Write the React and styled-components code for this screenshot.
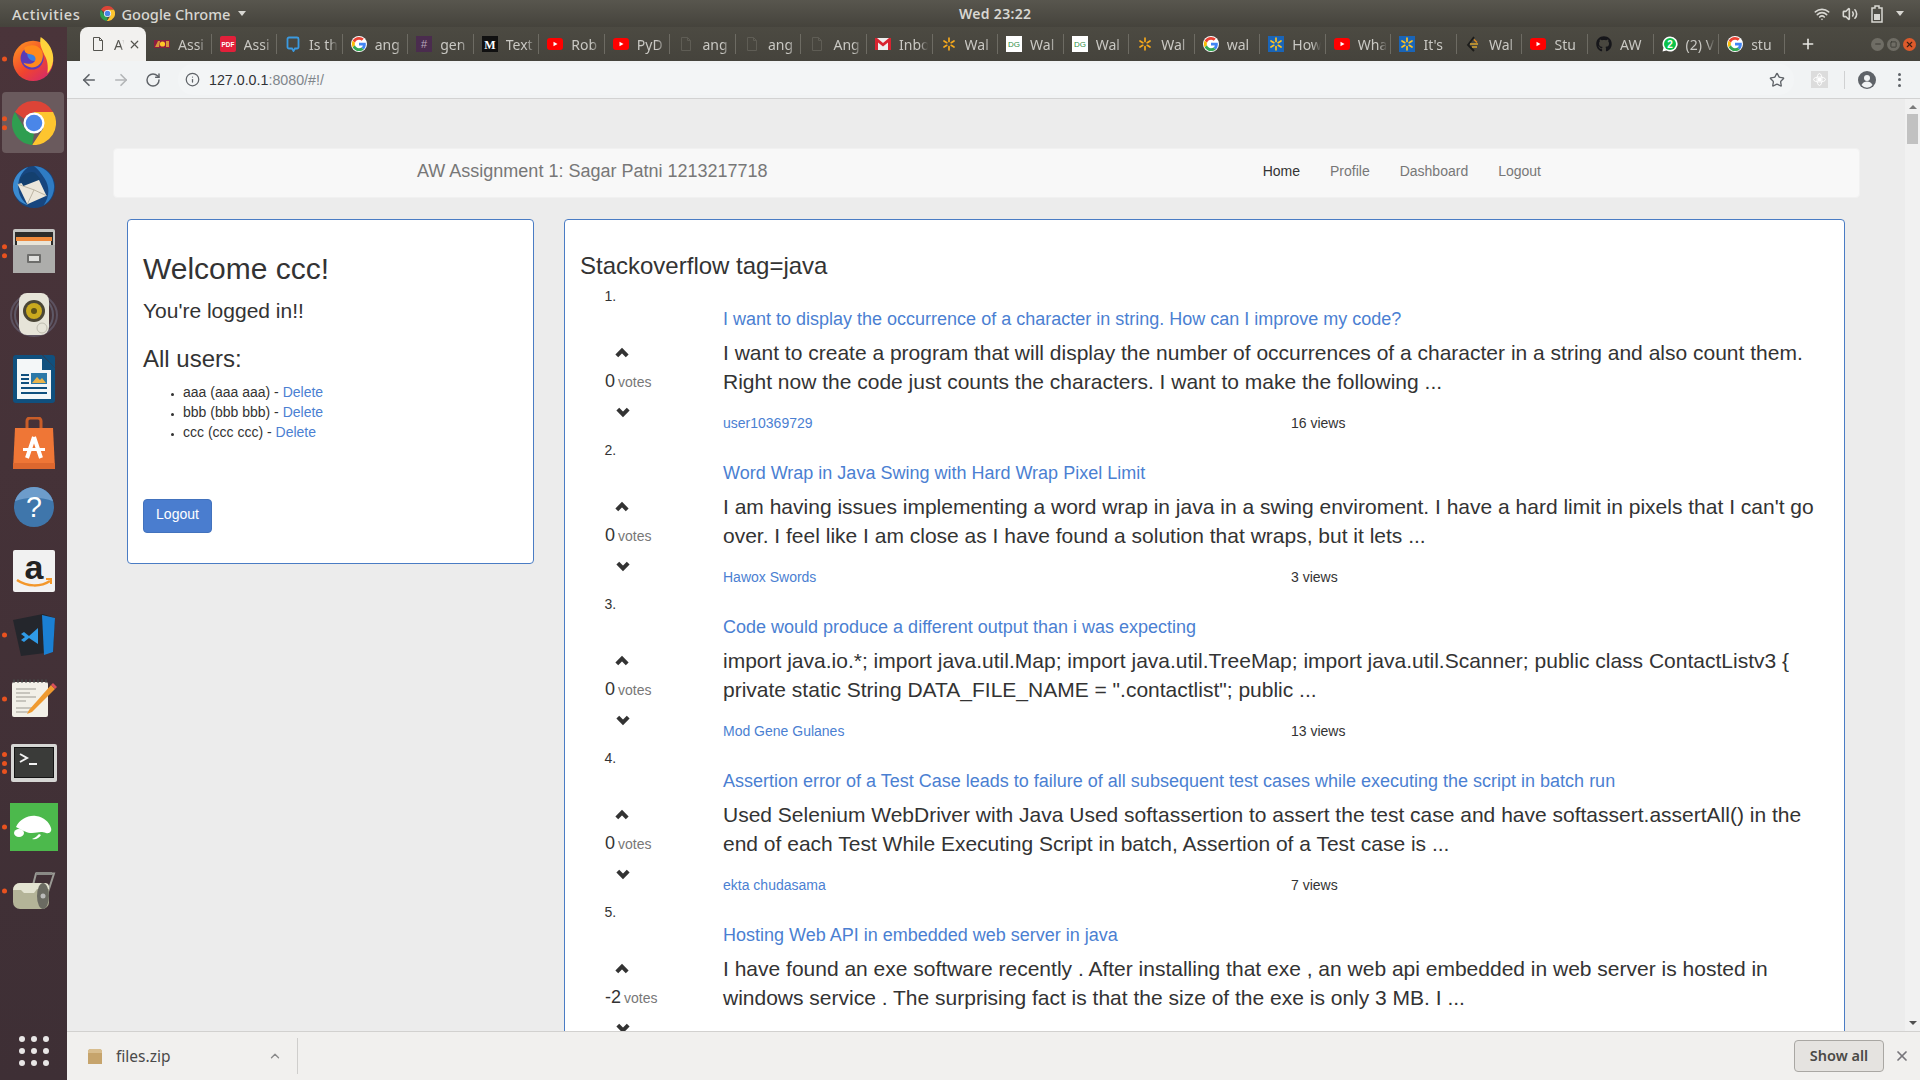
import React from 'react'
import styled, { createGlobalStyle } from 'styled-components'
import { ArrowLeft, ArrowRight, RotateCw, Info, Star, Wifi, Volume2, X, ChevronUp, Plus, Minus, Square } from 'lucide-react'
import { FaGithub } from 'react-icons/fa'

const Global = createGlobalStyle`
  html, body { margin: 0; padding: 0; height: 100%; overflow: hidden; background: #ececec; }
  * { box-sizing: border-box; }
`

const Screen = styled.div`
  width: 1920px;
  height: 1080px;
  display: flex;
  flex-direction: column;
  overflow: hidden;
  font-family: "Liberation Sans", Arial, sans-serif;
`

/* gnome top bar */
const TopBar = styled.div`
  flex: 0 0 27px;
  display: flex;
  align-items: center;
  padding: 0 12px;
  background: linear-gradient(#58564e, #45433c);
  color: #d8d7d2;
  font-family: "Noto Sans", sans-serif;
  font-size: 14.6px;
  font-weight: 500;
`
const TopLeft = styled.div`
  flex: 0 0 947px;
  display: flex;
  align-items: center;
`
const Activities = styled.span`
  margin-right: 20px;
  letter-spacing: 0.55px;
`
const AppName = styled.span`
  margin: 0 8px 0 6px;
`
const Caret = styled.span`
  width: 0;
  height: 0;
  border-left: 4.5px solid transparent;
  border-right: 4.5px solid transparent;
  border-top: 5px solid ${p => p.$color || '#d8d7d2'};
`
const Clock = styled.span`
  font-size: 14px;
  font-weight: 600;
  letter-spacing: 0.3px;
`
const Status = styled.div`
  margin-left: auto;
  display: flex;
  align-items: center;
  gap: 12px;
  padding-right: 4px;
`

const Body = styled.div`
  flex: 1;
  display: flex;
  min-height: 0;
`

/* launcher */
const Dock = styled.div`
  flex: 0 0 67px;
  background: linear-gradient(#4a343a, #3e2f35);
  display: flex;
  flex-direction: column;
`
const DockItem = styled.div`
  position: relative;
  flex: 0 0 64px;
  display: flex;
  align-items: center;
  justify-content: center;
  &::before {
    content: '';
    display: ${p => (p.$active ? 'block' : 'none')};
    position: absolute;
    left: 2px;
    right: 3px;
    top: 1px;
    bottom: 2px;
    background: #6a5a5d;
    border-radius: 4px;
  }
  svg { position: relative; }
`
const Pips = styled.div`
  position: absolute;
  left: 2px;
  top: 50%;
  transform: translateY(-50%);
  display: flex;
  flex-direction: column;
  gap: 3.5px;
  z-index: 1;
`
const Pip = styled.span`
  width: 5px;
  height: 5px;
  border-radius: 50%;
  background: #e9521f;
`
const AppGrid = styled.div`
  margin: auto auto 14px;
  display: grid;
  grid-template-columns: repeat(3, 6px);
  gap: 6px;
`
const AppDot = styled.span`
  width: 6px;
  height: 6px;
  border-radius: 50%;
  background: #e8e6e6;
`

const Browser = styled.div`
  flex: 1;
  min-width: 0;
  display: flex;
  flex-direction: column;
`
const TabStrip = styled.div`
  flex: 0 0 34px;
  display: flex;
  align-items: stretch;
  padding-left: 13px;
  background: linear-gradient(#4c4a42, #45433c);
`
const Tab = styled.div`
  position: relative;
  flex: 0 0 ${p => (p.$active ? '66px' : '65.56px')};
  display: flex;
  align-items: center;
  padding-left: ${p => (p.$active ? '10px' : '8px')};
  gap: 8px;
  font-family: "Noto Sans", sans-serif;
  font-size: 14px;
  color: ${p => (p.$active ? '#55544f' : '#c9c8c3')};
  background: ${p => (p.$active ? '#f2f1ef' : 'transparent')};
  border-radius: ${p => (p.$active ? '8px 8px 0 0' : '0')};
  &::after {
    content: '';
    display: ${p => (p.$active ? 'none' : 'block')};
    position: absolute;
    right: 0;
    top: 7px;
    height: 20px;
    width: 1px;
    background: #6d6b63;
  }
`
const TabIcon = styled.span`
  flex: 0 0 16px;
  height: 16px;
  display: flex;
  align-items: center;
  justify-content: center;
`
const TabLabel = styled.span`
  flex: 0 0 ${p => p.$w || 29}px;
  overflow: hidden;
  white-space: nowrap;
  -webkit-mask-image: linear-gradient(90deg, #000 70%, transparent);
  mask-image: linear-gradient(90deg, #000 70%, transparent);
`
const CloseTab = styled.span`
  margin-left: -4px;
  display: flex;
  color: #55544f;
`
const NewTab = styled.div`
  width: 46px;
  display: flex;
  align-items: center;
  justify-content: center;
  color: #e8e7e3;
`
const WinControls = styled.div`
  margin-left: auto;
  padding-right: 4px;
  display: flex;
  align-items: center;
  gap: 3px;
`
const WinButton = styled.span`
  width: 13px;
  height: 13px;
  border-radius: 50%;
  display: flex;
  align-items: center;
  justify-content: center;
  background: ${p => (p.$close ? '#dd5a2b' : '#6f6d65')};
  color: ${p => (p.$close ? '#3d2015' : '#3c3b35')};
`

const Toolbar = styled.div`
  flex: 0 0 38px;
  display: flex;
  align-items: center;
  background: #f1f3f4;
  border-bottom: 1px solid #d2d2d2;
  padding-left: 6px;
  color: #5f6368;
`
const NavIcon = styled.span`
  flex: 0 0 32px;
  display: flex;
  justify-content: center;
  color: ${p => (p.$off ? '#b3b5b7' : '#5f6368')};
`
const Omnibox = styled.div`
  flex: 0 0 1616px;
  margin-left: 9px;
  height: 31px;
  display: flex;
  align-items: center;
  padding: 0 9px 0 7px;
  border-radius: 15px;
  background: #f3f5f6;
  font-size: 14.25px;
`
const UrlHost = styled.span`
  margin-left: 9px;
  color: #303236;
`
const UrlRest = styled.span`
  color: #80868b;
`
const StarWrap = styled.span`
  margin-left: auto;
  display: flex;
  color: #5f6368;
`
const ExtIcon = styled.span`
  margin-left: 17px;
  width: 17px;
  height: 17px;
  background: #dcdcdc;
  display: flex;
  align-items: center;
  justify-content: center;
`
const ToolSep = styled.span`
  margin-left: 16px;
  width: 1px;
  height: 18px;
  background: #d0d1d2;
`
const Avatar = styled.span`
  margin-left: 13px;
  display: flex;
`
const Kebab = styled.span`
  margin-left: 22px;
  display: flex;
  flex-direction: column;
  gap: 2.5px;
  i {
    width: 3px;
    height: 3px;
    border-radius: 50%;
    background: #5f6368;
  }
`

const Viewport = styled.div`
  flex: 1;
  min-height: 0;
  display: flex;
  overflow: hidden;
  background: #ececec;
`
const Page = styled.div`
  flex: 1;
  min-width: 0;
  padding: 49px 45px 0 46px;
  color: #333;
  font-size: 14px;
  line-height: 20px;
`
const Scrollbar = styled.div`
  flex: 0 0 15px;
  display: flex;
  flex-direction: column;
  align-items: center;
  background: #f1f1f1;
  padding-top: 6px;
`
const ScrollThumb = styled.div`
  width: 11px;
  height: 30px;
  margin-top: 5px;
  background: #c1c1c1;
`
const ArrowUp = styled.span`
  width: 0;
  height: 0;
  border-left: 4px solid transparent;
  border-right: 4px solid transparent;
  border-bottom: 4px solid #7b7b7b;
`
const ArrowDown = styled(ArrowUp)`
  margin-top: auto;
  margin-bottom: 6px;
  border-bottom: 0;
  border-top: 4px solid #505050;
`

const Navbar = styled.div`
  height: 50px;
  display: flex;
  align-items: center;
  padding: 0 303px 4px;
  background: #f8f8f8;
  border: 1px solid #f1f1f1;
  border-radius: 4px;
`
const Brand = styled.span`
  font-size: 18px;
  color: #777;
`
const NavLinks = styled.div`
  margin-left: auto;
  margin-right: 15px;
  display: flex;
  gap: 30px;
`
const NavLink = styled.a`
  color: ${p => (p.$active ? '#333' : '#777')};
`
const Panels = styled.div`
  margin-top: 21px;
  padding: 0 15px 0 14px;
  display: flex;
  align-items: flex-start;
  gap: 30px;
`
const Panel = styled.div`
  flex: ${p => (p.$wide ? '1' : '0 0 407px')};
  min-width: 0;
  padding: 15px 15px ${p => (p.$wide ? '0' : '30px')};
  background: #fff;
  border: 1px solid #4a7cc4;
  border-radius: 4px;
`
const Welcome = styled.h2`
  margin: 17px 0 0;
  font-size: 30px;
  font-weight: 500;
  line-height: 33px;
`
const LoggedIn = styled.h4`
  margin: 15px 0 0;
  font-size: 21px;
  font-weight: 500;
  line-height: 22px;
`
const SubHead = styled.h3`
  margin: ${p => (p.$tight ? '18px' : '24px')} 0 0;
  font-size: 24px;
  font-weight: 500;
  line-height: 26px;
`
const Users = styled.ul`
  margin: 10px 0 0;
  padding-left: 40px;
  li::marker { font-size: 9px; }
`
const A = styled.a`
  color: #4b7fd2;
`
const PrimaryButton = styled.button`
  display: block;
  margin-top: 57px;
  width: 69px;
  height: 34px;
  padding: 0 0 4px;
  font: 14px "Liberation Sans", Arial, sans-serif;
  color: #fff;
  background: #4a7dcf;
  border: 1px solid #4272bd;
  border-radius: 4px;
`
const Questions = styled.ol`
  margin: 7px 0 0;
  padding: 0 0 0 40px;
`
const QuestionItem = styled.li`
  padding-bottom: 7.2px;
`
const MarkerLine = styled.div`
  height: 20px;
`
const QuestionRow = styled.div`
  margin-left: -15px;
  display: flex;
`
const VoteCol = styled.div`
  flex: 0 0 118px;
  padding-top: 40px;
  display: flex;
  flex-direction: column;
  align-items: flex-start;
`
const Chevron = styled.svg`
  display: block;
  margin-left: ${p => (p.$down ? '11px' : '10px')};
`
const VoteCount = styled.div`
  margin: 9px 0 11px;
  font-size: 18px;
  line-height: 24px;
  white-space: nowrap;
`
const VotesWord = styled.small`
  margin-left: -2px;
  font-size: 14px;
  color: #777;
`
const QuestionBody = styled.div`
  flex: 1;
  min-width: 0;
`
const QuestionTitle = styled.h4`
  margin: 1px 0 0;
  font-size: 18px;
  font-weight: 500;
  line-height: 24px;
`
const Lead = styled.p`
  margin: 7px 0 0;
  font-size: 21px;
  line-height: 29.4px;
`
const MetaRow = styled.div`
  margin-top: 16px;
  display: grid;
  grid-template-columns: 568px 1fr;
  height: 20px;
`

const Shelf = styled.div`
  flex: 0 0 49px;
  display: flex;
  align-items: center;
  background: #f1f0ee;
  border-top: 1px solid #d2d1cf;
  padding-left: 20px;
  font-family: "Noto Sans", sans-serif;
  color: #4a4a4a;
`
const FileName = styled.span`
  margin-left: 13px;
  width: 152px;
  font-size: 15.5px;
`
const ShelfSep = styled.span`
  margin-left: 15px;
  width: 1px;
  height: 36px;
  background: #cfcecc;
`
const ShowAll = styled.button`
  margin-left: auto;
  width: 90px;
  height: 32px;
  padding-bottom: 3px;
  font: 600 14.5px "Noto Sans", sans-serif;
  color: #4b4a47;
  background: #e5e3e0;
  border: 1px solid #a9a7a3;
  border-radius: 4px;
`
const ShelfClose = styled.span`
  margin: 0 10px;
  display: flex;
  color: #77757a;
`

const GoogleG = () => (
  <svg width="16" height="16" viewBox="-3 -3 54 54">
    <circle cx="24" cy="24" r="27" fill="#fff" />
    <path fill="#ea4335" d="M24 9.5c3.54 0 6.71 1.22 9.21 3.6l6.85-6.85C35.9 2.38 30.47 0 24 0 14.62 0 6.51 5.38 2.56 13.22l7.98 6.19C12.43 13.72 17.74 9.5 24 9.5z" />
    <path fill="#4285f4" d="M46.98 24.55c0-1.57-.15-3.09-.38-4.55H24v9.02h12.94c-.58 2.96-2.26 5.48-4.78 7.18l7.73 6c4.51-4.18 7.09-10.36 7.09-17.65z" />
    <path fill="#fbbc05" d="M10.53 28.59c-.48-1.45-.76-2.99-.76-4.59s.27-3.14.76-4.59l-7.98-6.19C.92 16.46 0 20.12 0 24c0 3.88.92 7.54 2.56 10.78l7.97-6.19z" />
    <path fill="#34a853" d="M24 48c6.48 0 11.93-2.13 16.06-5.81l-7.73-6c-2.15 1.45-4.92 2.3-8.33 2.3-6.26 0-11.57-4.22-13.47-9.91l-7.98 6.18C6.51 42.62 14.62 48 24 48z" />
  </svg>
)

const Spark = ({ color }) => (
  <g stroke={color} strokeWidth="1.7" strokeLinecap="round">
    <path d="M8 2.2v3.3M8 10.5v3.3M3 5l2.8 1.7M10.2 9.3 13 11M3 11l2.8-1.7M10.2 6.7 13 5" />
  </g>
)

const Favicon = ({ kind }) => {
  switch (kind) {
    case 'asu':
      return (
        <svg width="16" height="16" viewBox="0 0 16 16">
          <rect y="4" width="16" height="8" fill="#8c1d40" />
          <circle cx="8.5" cy="8" r="2.6" fill="#ffc627" />
          <path d="M1 11 4 5h2l-1 6zM12 5h3v6h-3z" fill="#e8b73a" opacity=".8" />
        </svg>
      )
    case 'pdf':
      return (
        <svg width="16" height="16" viewBox="0 0 16 16">
          <rect width="16" height="16" rx="2" fill="#e2203a" />
          <text x="8" y="10.6" fontSize="6.4" fontWeight="700" textAnchor="middle" fill="#fff" fontFamily="Liberation Sans">PDF</text>
        </svg>
      )
    case 'chat':
      return (
        <svg width="16" height="16" viewBox="0 0 16 16">
          <path d="M4 1.5h8a1.5 1.5 0 0 1 1.5 1.5v8a1.5 1.5 0 0 1-1.5 1.5H10L8.500 15 7 12.500H4A1.500 1.500 0 0 1 2.500 11V3A1.500 1.500 0 0 1 4 1.500z" fill="none" stroke="#3b9ae0" strokeWidth="1.800" />
        </svg>
      )
    case 'google':
      return <GoogleG />
    case 'slack':
      return (
        <svg width="16" height="16" viewBox="0 0 16 16">
          <rect width="16" height="16" fill="#4a2c4e" />
          <text x="8" y="12" fontSize="11" textAnchor="middle" fill="#b9a9bb" fontFamily="Liberation Sans">#</text>
        </svg>
      )
    case 'medium':
      return (
        <svg width="16" height="16" viewBox="0 0 16 16">
          <rect width="16" height="16" fill="#111" />
          <text x="8" y="12.500" fontSize="12" fontWeight="700" textAnchor="middle" fill="#fff" fontFamily="Liberation Serif">M</text>
        </svg>
      )
    case 'youtube':
      return (
        <svg width="16" height="16" viewBox="0 0 16 16">
          <rect y="2" width="16" height="12" rx="3" fill="#f00" />
          <path d="M6.500 5.800 10.500 8l-4 2.200z" fill="#fff" />
        </svg>
      )
    case 'blank':
      return (
        <svg width="16" height="16" viewBox="0 0 16 16">
          <path d="M3.500 1.500h6l3 3v10h-9zM9.500 1.500v3h3" fill="none" stroke="#5f5d55" />
        </svg>
      )
    case 'gmail':
      return (
        <svg width="16" height="16" viewBox="0 0 16 16">
          <rect y="2" width="16" height="12" fill="#eee" />
          <path d="M0 2v12h3V6.500l5 4 5-4V14h3V2h-2L8 7 2 2z" fill="#d8232f" />
        </svg>
      )
    case 'walmart':
      return (
        <svg width="16" height="16" viewBox="0 0 16 16"><Spark color="#f5a81c" /></svg>
      )
    case 'walmartBlue':
      return (
        <svg width="16" height="16" viewBox="0 0 16 16">
          <rect width="16" height="16" fill="#1a65b8" />
          <Spark color="#ffc220" />
        </svg>
      )
    case 'gfg':
      return (
        <svg width="16" height="16" viewBox="0 0 16 16">
          <rect width="16" height="16" fill="#fff" />
          <text x="8" y="10.800" fontSize="8" textAnchor="middle" fill="#2f8d46" fontFamily="Liberation Sans">DG</text>
        </svg>
      )
    case 'edge':
      return (
        <svg width="16" height="16" viewBox="0 0 16 16">
          <path d="M9 1 3 9l6 6" fill="none" stroke="#1c1c1a" strokeWidth="1.800" />
          <path d="M5 8h8M7 11h5" stroke="#d7a531" strokeWidth="1.500" />
          <path d="M9 3.500l3 3" stroke="#e08a1e" strokeWidth="1.500" />
        </svg>
      )
    case 'github':
      return <FaGithub size={16} color="#16161a" />
    case 'whatsapp':
      return (
        <svg width="16" height="16" viewBox="0 0 16 16">
          <path d="M8 .5A7.500 7.500 0 0 0 1.500 11.700L.5 15.500l3.900-1A7.500 7.500 0 1 0 8 .5z" fill="#fff" />
          <circle cx="8" cy="8" r="6" fill="#0cc14a" />
          <text x="8" y="11.500" fontSize="10" fontWeight="700" textAnchor="middle" fill="#fff" fontFamily="Liberation Sans">2</text>
        </svg>
      )
    default:
      return null
  }
}

const tabs = [
  ['asu', 'Assi'], ['pdf', 'Assi'], ['chat', 'Is th'], ['google', 'ang'], ['slack', 'gen'],
  ['medium', 'Text'], ['youtube', 'Rob'], ['youtube', 'PyD'], ['blank', 'ang'], ['blank', 'ang'],
  ['blank', 'Ang'], ['gmail', 'Inbo'], ['walmart', 'Wal'], ['gfg', 'Wal'], ['gfg', 'Wal'],
  ['walmart', 'Wal'], ['google', 'wal'], ['walmartBlue', 'How'], ['youtube', 'Wha'], ['walmartBlue', "It's"],
  ['edge', 'Wal'], ['youtube', 'Stu'], ['github', 'AW'], ['whatsapp', '(2) V'], ['google', 'stu'],
]

const ChromeIcon = ({ size = 44 }) => (
  <svg width={size} height={size} viewBox="0 0 48 48">
    <path d="M3.200 12A24 24 0 0 1 44.800 12H24L13 19z" fill="#dc4437" />
    <path d="M44.800 12A24 24 0 0 1 22 48L34 30 24 12z" fill="#fdc52f" />
    <path d="M22 48A24 24 0 0 1 3.200 12L14 30 24 36z" fill="#2f9e50" />
    <circle cx="24" cy="24" r="11.500" fill="#fff" />
    <circle cx="24" cy="24" r="9" fill="#4a86e8" />
  </svg>
)

const dockIcons = [
  {
    pips: 1,
    icon: (
      <svg width="46" height="46" viewBox="0 0 48 48">
        <defs>
          <linearGradient id="ff" x1="0" y1="0" x2="0.8" y2="1">
            <stop offset="0" stopColor="#ff9a1f" />
            <stop offset="0.6" stopColor="#f0442f" />
            <stop offset="1" stopColor="#d42a6b" />
          </linearGradient>
        </defs>
        <circle cx="23" cy="26" r="21" fill="url(#ff)" />
        <circle cx="22" cy="23" r="12" fill="#5a3bb5" />
        <circle cx="24" cy="19" r="7" fill="#3a7fe0" />
        <path d="M14 12c7-4 14-3 18 3 3 5 1 14-6 17-5 2-11 0-13-4 5 2 10 1 12-2 2-3-1-7-5-7-3 0-7-2-6-7z" fill="#ff8a1c" />
        <path d="M31 1c9 6 14 15 13 25-1 6-3 10-6 13 1-8 0-14-3-19C33 15 29 9 31 1z" fill="#ffd23c" />
      </svg>
    ),
  },
  { pips: 2, active: true, icon: <ChromeIcon /> },
  {
    icon: (
      <svg width="46" height="46" viewBox="0 0 48 48">
        <circle cx="24" cy="24" r="22" fill="#17467f" />
        <path d="M24 2a22 22 0 0 1 10 41c6-8 7-19 1-28C32 10 28 5 24 2z" fill="#2f7cc4" />
        <path d="M2 24C2 14 9 6 18 3 10 9 6 18 8 28c1 6 5 12 10 15C9 41 2 33 2 24z" fill="#3b8ad0" />
        <path d="M7 21 28 14l9 19-20 9z" fill="#ece7db" />
        <path d="M7 21l17 6 13 6M17 42l7-15" fill="none" stroke="#b9b2a0" />
        <path d="M9 17c3-7 11-10 16-8l6 7-18 7z" fill="#14406f" />
      </svg>
    ),
  },
  {
    pips: 2,
    icon: (
      <svg width="44" height="46" viewBox="0 0 44 46">
        <rect x="1" y="1" width="42" height="44" rx="2" fill="#c4c4c2" />
        <rect x="3" y="4" width="38" height="13" fill="#2c2c2b" />
        <rect x="4" y="9" width="36" height="4" fill="#f08a3c" />
        <rect x="5" y="13" width="34" height="4" fill="#e8e4d8" />
        <rect x="1" y="17" width="42" height="28" fill="#adadab" />
        <rect x="15" y="26" width="14" height="9" rx="1" fill="#6d6d6b" />
        <rect x="17" y="28" width="10" height="5" fill="#e0e0de" />
      </svg>
    ),
  },
  {
    icon: (
      <svg width="48" height="46" viewBox="0 0 48 46">
        <ellipse cx="24" cy="23" rx="23" ry="21" fill="none" stroke="#5c5260" strokeWidth="2" />
        <ellipse cx="24" cy="23" rx="19" ry="19" fill="none" stroke="#5e5866" strokeWidth="2" />
        <rect x="9" y="1" width="30" height="42" rx="8" fill="#e6e4d8" />
        <circle cx="24" cy="19" r="11" fill="#4a4636" />
        <circle cx="24" cy="19" r="8" fill="#c9a91e" />
        <circle cx="24" cy="19" r="3" fill="#5e5217" />
        <circle cx="32" cy="36" r="5" fill="none" stroke="#bfbdb0" />
      </svg>
    ),
  },
  {
    icon: (
      <svg width="42" height="48" viewBox="0 0 42 48">
        <path d="M3 0h26l13 13v32a3 3 0 0 1-3 3H3a3 3 0 0 1-3-3V3a3 3 0 0 1 3-3z" fill="#10507e" />
        <path d="M4 4h25v11h9v29H4z" fill="#f4f7f8" />
        <path d="M30 0h9a3 3 0 0 1 3 3v10z" fill="#10507e" />
        <path d="M8 19h8v2H8zM8 23h8v2H8zM8 27h8v2H8zM8 32h26v2H8zM8 37h26v2H8z" fill="#10507e" />
        <rect x="18" y="18" width="16" height="11" fill="#2c79a8" />
        <path d="M19 28l5-6 3 3 2-2 4 5z" fill="#e9b44c" />
      </svg>
    ),
  },
  {
    icon: (
      <svg width="42" height="52" viewBox="0 0 42 52">
        <path d="M14 14V4a3 3 0 0 1 3-3h8a3 3 0 0 1 3 3v10" fill="none" stroke="#c95d28" strokeWidth="3" />
        <path d="M2 11h38l2 41H0z" fill="#ef7636" />
        <path d="M0 46h42v6H0z" fill="#dd672e" />
        <path d="M21 20 14 41M21 20l7 21" stroke="#fff" strokeWidth="4" />
        <rect x="10" y="31" width="22" height="3" fill="#fff" />
      </svg>
    ),
  },
  {
    icon: (
      <svg width="40" height="40" viewBox="0 0 42 42">
        <circle cx="21" cy="21" r="21" fill="#3f76ab" />
        <path d="M21 0a21 21 0 0 1 20 15C30 10 12 10 1 15A21 21 0 0 1 21 0z" fill="#6d9ccb" />
        <text x="21" y="32" fontSize="30" textAnchor="middle" fill="#fff" fontFamily="Liberation Sans">?</text>
      </svg>
    ),
  },
  {
    icon: (
      <svg width="42" height="42" viewBox="0 0 42 42">
        <rect width="42" height="42" rx="2" fill="#f1f1f1" />
        <text x="21" y="29" fontSize="34" fontWeight="700" textAnchor="middle" fill="#222" fontFamily="Liberation Sans">a</text>
        <path d="M4 30c10 7 24 7 33 1" fill="none" stroke="#f3972a" strokeWidth="2.500" />
        <path d="M33 29h5v5" fill="none" stroke="#f3972a" strokeWidth="2" />
      </svg>
    ),
  },
  {
    pips: 1,
    icon: (
      <svg width="42" height="42" viewBox="0 0 42 42">
        <path d="M0 6 30 0l12 4-2 34-32 4z" fill="#24262c" />
        <path d="M29 1l13 3-2 34-9 3z" fill="#1b80d3" />
        <path d="M8 20l3-2 5 4 9-8v16l-9-6-5 4-3-2 4-3z" fill="#2f9ae6" />
      </svg>
    ),
  },
  {
    pips: 1,
    icon: (
      <svg width="46" height="40" viewBox="0 0 46 40">
        <rect x="1" y="3" width="36" height="35" rx="2" fill="#f2f0e8" />
        <path d="M2 2h34" stroke="#444" strokeWidth="3" strokeDasharray="2 2" />
        <path d="M5 10h20M5 14h14M5 18h20M5 22h10M5 29h18M5 33h14" stroke="#9c9a92" />
        <path d="M18 31 40 6l4 4-23 23-5 2z" fill="#ef9a2f" />
        <path d="M40 6l2-2 4 4-2 2z" fill="#d9505a" />
      </svg>
    ),
  },
  {
    pips: 3,
    icon: (
      <svg width="46" height="38" viewBox="0 0 46 38">
        <rect width="46" height="38" rx="2" fill="#d6d6d4" />
        <rect x="3" y="3" width="40" height="31" fill="#141414" />
        <rect x="4" y="4" width="38" height="29" fill="#3a3b39" />
        <path d="M9 10l7 4-7 4" fill="none" stroke="#f2f2f2" strokeWidth="2" />
        <path d="M18 20h8" stroke="#f2f2f2" strokeWidth="2" />
      </svg>
    ),
  },
  {
    pips: 1,
    icon: (
      <svg width="48" height="48" viewBox="0 0 48 48">
        <rect width="48" height="48" fill="#4cb94c" />
        <path d="M6 24c4-8 12-12 20-11 8 1 13 6 15 12 1 3-1 6-5 5-6-2-8 0-14 0-5 0-8-2-16-6z" fill="#fff" />
        <ellipse cx="9" cy="30" rx="5" ry="4" fill="#fff" />
        <path d="M22 36c3-1 5-3 7-5l2 1c-2 3-5 5-9 4z" fill="#fff" />
      </svg>
    ),
  },
  {
    pips: 1,
    icon: (
      <svg width="44" height="38" viewBox="0 0 44 38">
        <path d="M21 13 24 1.500H42L36 20" fill="none" stroke="#9a9a95" strokeWidth="2" />
        <rect x="24" y="0" width="16" height="3" fill="#8a8a86" />
        <rect x="1" y="11" width="36" height="26" rx="7" fill="#b4b498" />
        <path d="M1 18h8l3 3h10l3-4h12v-3a4 4 0 0 0-4-3H8a7 7 0 0 0-7 7z" fill="#e4e4d2" />
        <ellipse cx="31" cy="24" rx="6" ry="13" fill="#6b6b62" />
        <circle cx="31" cy="24" r="2.500" fill="#bbb" />
      </svg>
    ),
  },
]

const questions = [
  {
    title: 'I want to display the occurrence of a character in string. How can I improve my code?',
    text: 'I want to create a program that will display the number of occurrences of a character in a string and also count them. Right now the code just counts the characters. I want to make the following ...',
    author: 'user10369729',
    views: 16,
    votes: 0,
  },
  {
    title: 'Word Wrap in Java Swing with Hard Wrap Pixel Limit',
    text: "I am having issues implementing a word wrap in java in a swing enviroment. I have a hard limit in pixels that I can't go over. I feel like I am close as I have found a solution that wraps, but it lets ...",
    author: 'Hawox Swords',
    views: 3,
    votes: 0,
  },
  {
    title: 'Code would produce a different output than i was expecting',
    text: 'import java.io.*; import java.util.Map; import java.util.TreeMap; import java.util.Scanner; public class ContactListv3 { private static String DATA_FILE_NAME = ".contactlist"; public ...',
    author: 'Mod Gene Gulanes',
    views: 13,
    votes: 0,
  },
  {
    title: 'Assertion error of a Test Case leads to failure of all subsequent test cases while executing the script in batch run',
    text: 'Used Selenium WebDriver with Java Used softassertion to assert the test case and have softassert.assertAll() in the end of each Test While Executing Script in batch, Assertion of a Test case is ...',
    author: 'ekta chudasama',
    views: 7,
    votes: 0,
  },
  {
    title: 'Hosting Web API in embedded web server in java',
    text: 'I have found an exe software recently . After installing that exe , an web api embedded in web server is hosted in windows service . The surprising fact is that the size of the exe is only 3 MB. I ...',
    author: '',
    views: 21,
    votes: -2,
  },
]

const users = [
  ['aaa', 'aaa aaa'],
  ['bbb', 'bbb bbb'],
  ['ccc', 'ccc ccc'],
]

const VoteChevron = ({ down }) => (
  <Chevron $down={down} width="14" height="14" viewBox="0 0 14 14">
    <path d={down ? 'M1.800 4.200 7 9.400 12.200 4.200' : 'M1.800 9.800 7 4.600 12.200 9.800'} fill="none" stroke="#333" strokeWidth="4" />
  </Chevron>
)

export default function App() {
  return (
    <Screen>
      <Global />
      <TopBar>
        <TopLeft>
          <Activities>Activities</Activities>
          <ChromeIcon size={15} />
          <AppName>Google Chrome</AppName>
          <Caret />
        </TopLeft>
        <Clock>Wed 23:22</Clock>
        <Status>
          <Wifi size={16} strokeWidth={2.4} />
          <Volume2 size={16} strokeWidth={2.4} />
          <svg width="14" height="18" viewBox="0 0 14 18">
            <path d="M5 1h4v2h3v14H2V3h3z" fill="none" stroke="#d8d7d2" strokeWidth="1.500" />
            <rect x="4" y="9" width="6" height="6" fill="#d8d7d2" />
          </svg>
          <Caret />
        </Status>
      </TopBar>
      <Body>
        <Dock>
          {dockIcons.map((item, i) => (
            <DockItem key={i} $active={item.active}>
              {item.pips && (
                <Pips>
                  {Array.from({ length: item.pips }).map((_, j) => <Pip key={j} />)}
                </Pips>
              )}
              {item.icon}
            </DockItem>
          ))}
          <AppGrid>
            {Array.from({ length: 9 }).map((_, i) => <AppDot key={i} />)}
          </AppGrid>
        </Dock>
        <Browser>
          <TabStrip>
            <Tab $active>
              <TabIcon><svg width="16" height="16" viewBox="0 0 16 16"><path d="M3.500 1.500h6l3 3v10h-9zM9.500 1.500v3h3" fill="none" stroke="#55544f" /></svg></TabIcon>
              <TabLabel $w={10}>AW</TabLabel>
              <CloseTab><X size={13} strokeWidth={2.2} /></CloseTab>
            </Tab>
            {tabs.map(([kind, label], i) => (
              <Tab key={i}>
                <TabIcon><Favicon kind={kind} /></TabIcon>
                <TabLabel>{label}</TabLabel>
              </Tab>
            ))}
            <NewTab><Plus size={16} strokeWidth={2.4} /></NewTab>
            <WinControls>
              <WinButton><Minus size={8} strokeWidth={3} /></WinButton>
              <WinButton><Square size={7} strokeWidth={3} /></WinButton>
              <WinButton $close><X size={9} strokeWidth={3} /></WinButton>
            </WinControls>
          </TabStrip>
          <Toolbar>
            <NavIcon><ArrowLeft size={18} strokeWidth={2.2} /></NavIcon>
            <NavIcon $off><ArrowRight size={18} strokeWidth={2.2} /></NavIcon>
            <NavIcon><RotateCw size={16} strokeWidth={2.2} /></NavIcon>
            <Omnibox>
              <Info size={15} strokeWidth={2} />
              <UrlHost>127.0.0.1</UrlHost>
              <UrlRest>:8080/#!/</UrlRest>
              <StarWrap><Star size={16} strokeWidth={2} /></StarWrap>
            </Omnibox>
            <ExtIcon>
              <svg width="13" height="13" viewBox="0 0 13 13">
                <circle cx="6.500" cy="6.500" r="2" fill="#fff" />
                <ellipse cx="6.500" cy="6.500" rx="6" ry="2.500" fill="none" stroke="#fff" />
                <ellipse cx="6.500" cy="6.500" rx="2.500" ry="6" fill="none" stroke="#fff" />
              </svg>
            </ExtIcon>
            <ToolSep />
            <Avatar>
              <svg width="18" height="18" viewBox="0 0 18 18">
                <circle cx="9" cy="9" r="9" fill="#5f6368" />
                <circle cx="9" cy="7" r="3" fill="#f1f3f4" />
                <path d="M3.500 14c1-2.500 3.500-3.500 5.500-3.500s4.500 1 5.500 3.500A7 7 0 0 1 3.500 14z" fill="#f1f3f4" />
              </svg>
            </Avatar>
            <Kebab><i /><i /><i /></Kebab>
          </Toolbar>
          <Viewport>
            <Page>
              <Navbar>
                <Brand>AW Assignment 1: Sagar Patni 1213217718</Brand>
                <NavLinks>
                  <NavLink $active>Home</NavLink>
                  <NavLink>Profile</NavLink>
                  <NavLink>Dashboard</NavLink>
                  <NavLink>Logout</NavLink>
                </NavLinks>
              </Navbar>
              <Panels>
                <Panel>
                  <Welcome>Welcome ccc!</Welcome>
                  <LoggedIn>You're logged in!!</LoggedIn>
                  <SubHead>All users:</SubHead>
                  <Users>
                    {users.map(([name, full]) => (
                      <li key={name}>{name} ({full}) - <A>Delete</A></li>
                    ))}
                  </Users>
                  <PrimaryButton>Logout</PrimaryButton>
                </Panel>
                <Panel $wide>
                  <SubHead $tight>Stackoverflow tag=java</SubHead>
                  <Questions>
                    {questions.map(q => (
                      <QuestionItem key={q.title}>
                        <MarkerLine>&nbsp;</MarkerLine>
                        <QuestionRow>
                          <VoteCol>
                            <VoteChevron />
                            <VoteCount>{q.votes} <VotesWord>votes</VotesWord></VoteCount>
                            <VoteChevron down />
                          </VoteCol>
                          <QuestionBody>
                            <QuestionTitle><A>{q.title}</A></QuestionTitle>
                            <Lead>{q.text}</Lead>
                            <MetaRow>
                              <A>{q.author}</A>
                              <span>{q.views} views</span>
                            </MetaRow>
                          </QuestionBody>
                        </QuestionRow>
                      </QuestionItem>
                    ))}
                  </Questions>
                </Panel>
              </Panels>
            </Page>
            <Scrollbar>
              <ArrowUp />
              <ScrollThumb />
              <ArrowDown />
            </Scrollbar>
          </Viewport>
          <Shelf>
            <svg width="16" height="15" viewBox="0 0 16 15">
              <path d="M1 3a3 3 0 0 1 3-3h8a3 3 0 0 1 3 3v12H1z" fill="#c6a46c" />
              <path d="M4 0h8a3 3 0 0 1 3 3v1H1V3a3 3 0 0 1 3-3z" fill="#d8bd8e" />
            </svg>
            <FileName>files.zip</FileName>
            <ChevronUp size={14} strokeWidth={2.4} color="#8a8a8a" />
            <ShelfSep />
            <ShowAll>Show all</ShowAll>
            <ShelfClose><X size={16} strokeWidth={2.6} /></ShelfClose>
          </Shelf>
        </Browser>
      </Body>
    </Screen>
  )
}
